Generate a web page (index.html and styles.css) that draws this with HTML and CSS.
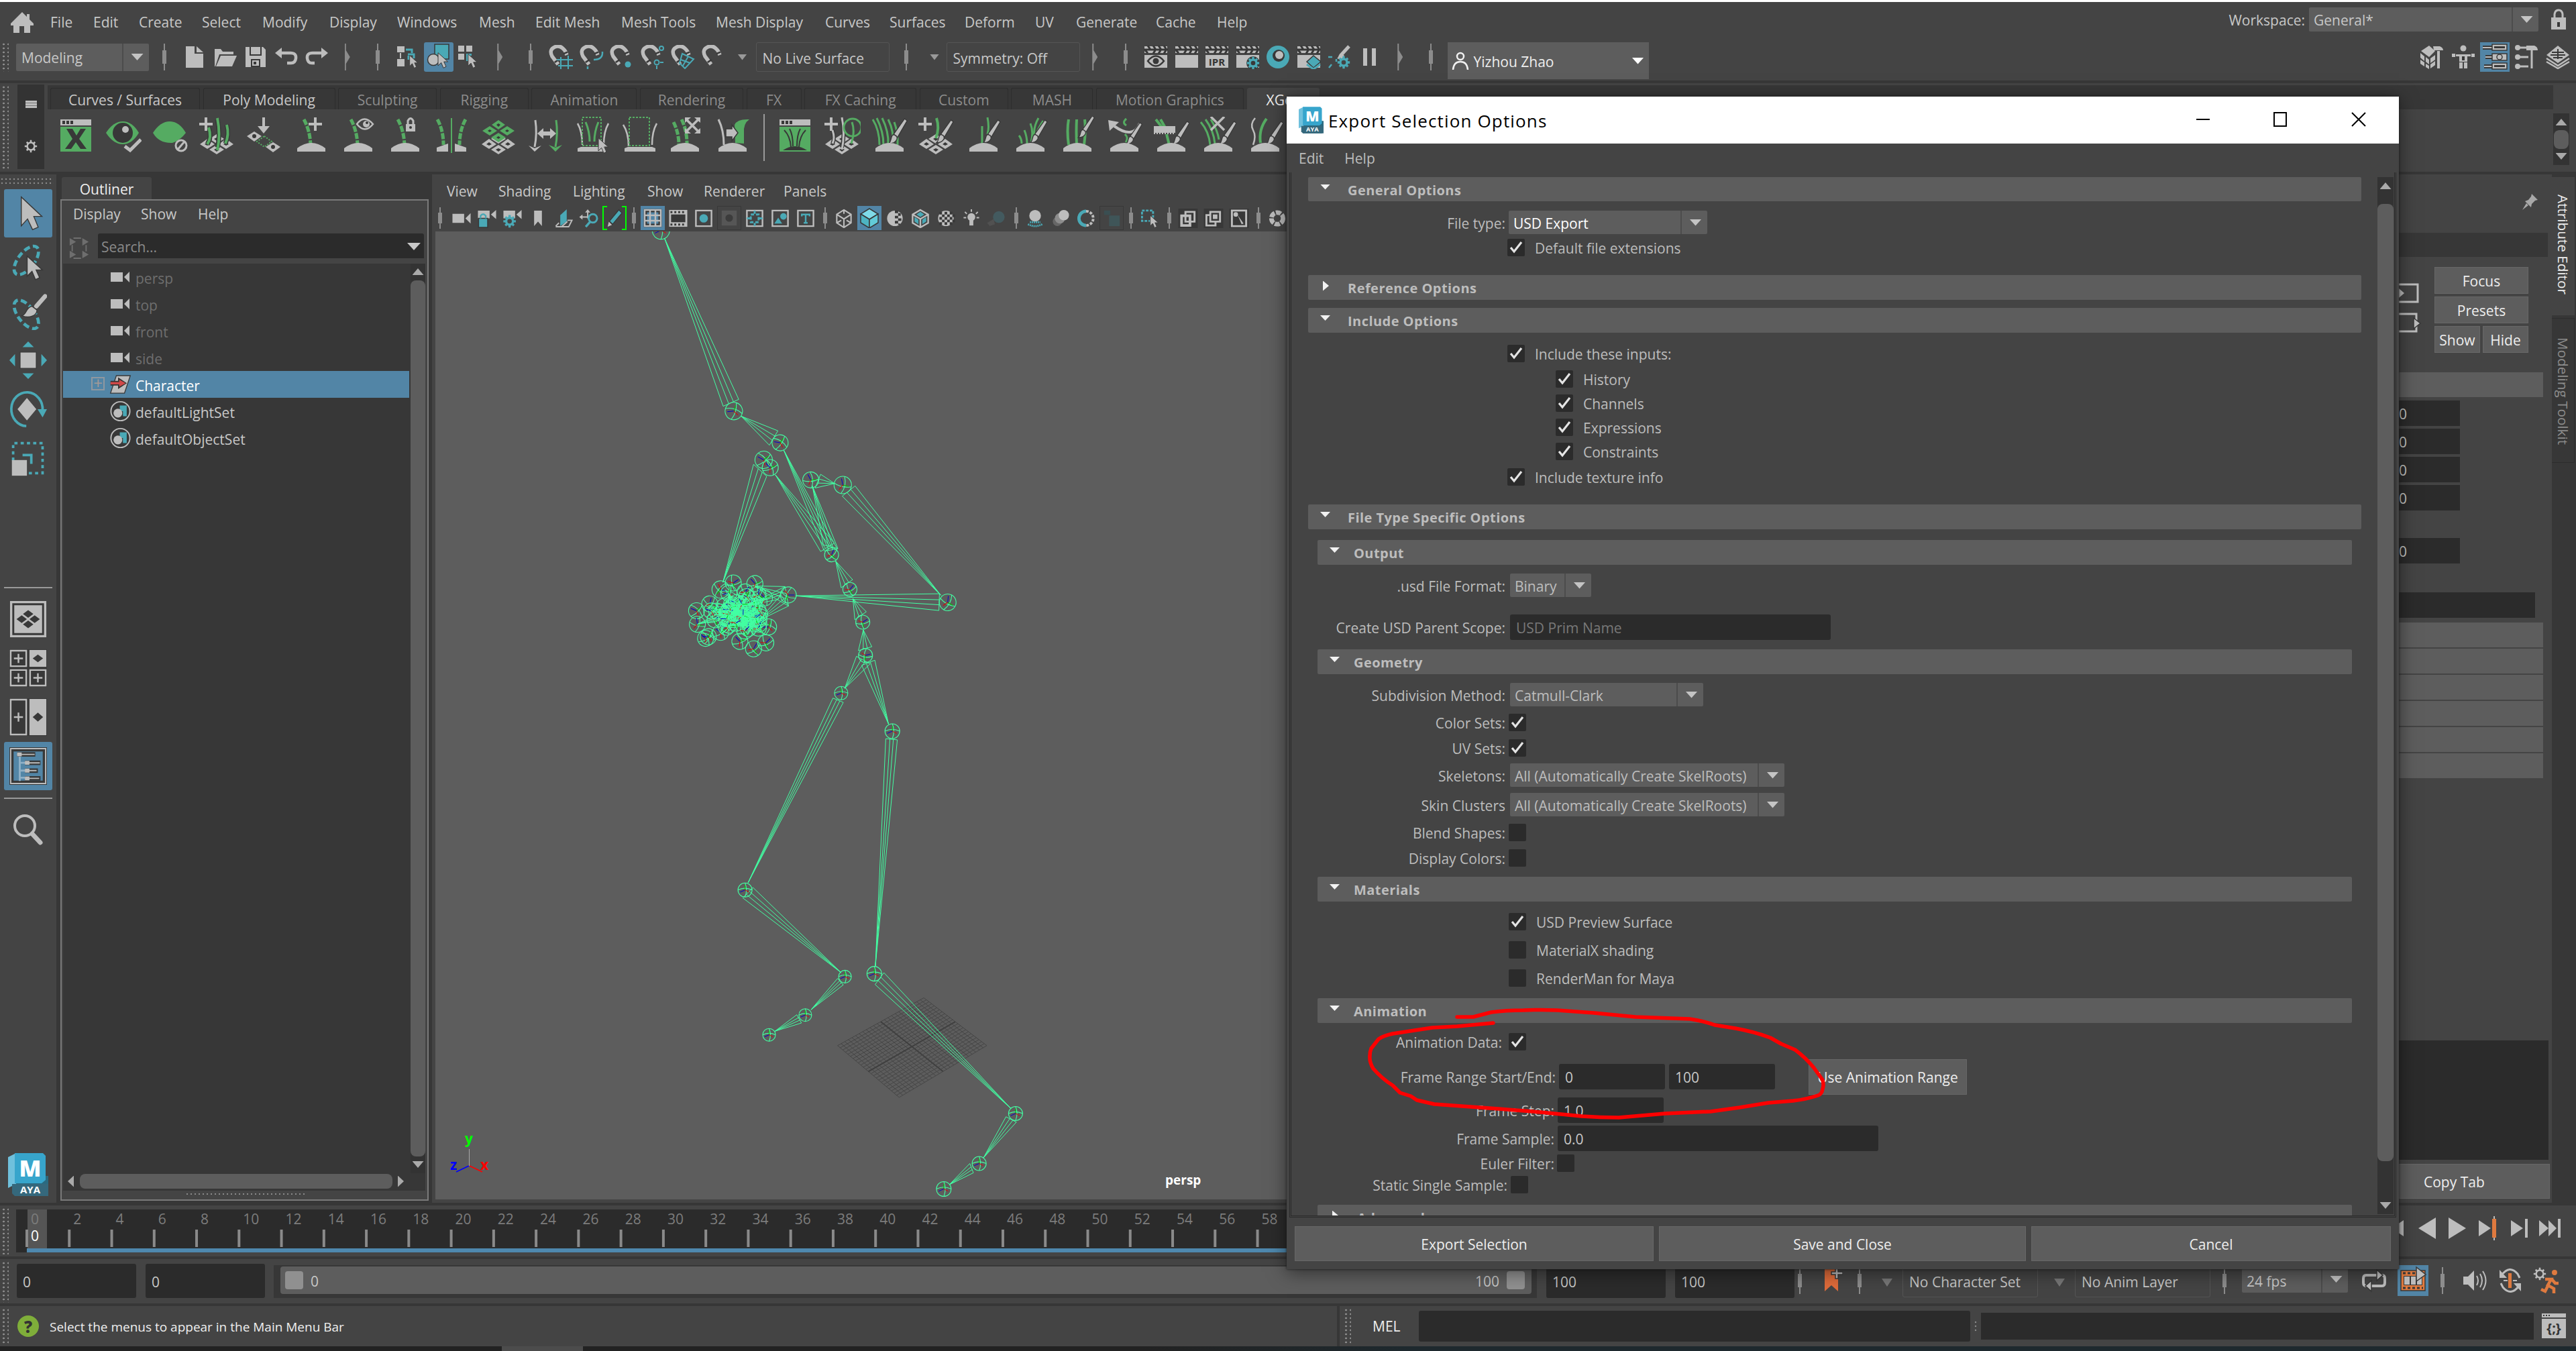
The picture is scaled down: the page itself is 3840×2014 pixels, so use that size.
FILE: index.html
```html
<!DOCTYPE html>
<html lang="en">
<head>
<meta charset="utf-8">
<title>Export Selection Options</title>
<link rel="stylesheet" href="styles.css">
</head>
<body>
<svg class="sprite" aria-hidden="true">
  <!-- shared pieces -->
  <symbol id="cursor" viewBox="0 0 36 36"><path class="g o" d="M3 1v29l7-7 5 12 6-3-5-11h9z"/></symbol>
  <symbol id="gear" viewBox="0 0 24 24"><circle class="gs" cx="12" cy="12" r="6.500" stroke-width="3"/><path class="gs" stroke-width="3" d="M12 1v5M12 18v5M1 12h5M18 12h5M4.500 4.500l3 3M16.500 16.500l3 3M19.500 4.500l-3 3M7.500 16.500l-3 3"/></symbol>
  <symbol id="gear-teal" viewBox="0 0 24 24"><circle class="ts" cx="12" cy="12" r="6" stroke-width="4"/><path class="ts" stroke-width="4" d="M12 1v5M12 18v5M1 12h5M18 12h5M4.500 4.500l3 3M16.500 16.500l3 3M19.500 4.500l-3 3M7.500 16.500l-3 3"/></symbol>
  <symbol id="brush" viewBox="0 0 30 46"><path class="g o" d="M26 1l4 3-15 26-6-5zM8 26c4 0 7 2 6 7-2 5-7 7-13 7 5-4 3-12 7-14z"/></symbol>
  <symbol id="ground" viewBox="0 0 42 14"><path class="g" d="M0 14V9Q21-7 42 9v5z"/></symbol>
  <symbol id="plus" viewBox="0 0 20 20"><path class="g" d="M8 0h4v8h8v4h-8v8H8v-8H0V8h8z"/></symbol>
  <symbol id="logo" viewBox="0 0 60 64"><path fill="#2a6a80" d="M6 34h54v24l-4 6H10z"/><path fill="#6fc0dc" d="M0 6l12-6v46L0 52z"/><path fill="#37a5cc" d="M10 0h42l4 4v36l-6 5H10z"/><path fill="#35687c" d="M6 46h54v18H10l-4-4z"/><text x="33" y="35" class="logo-m">M</text><text x="33" y="60" class="logo-aya">AYA</text></symbol>

  <!-- status line -->
  <symbol id="home" viewBox="0 0 36 32"><path class="g" d="M18 1L1 18v3h4v11h9V22h7v10h9V21h5v-3l-6-6V4h-4v4z"/></symbol>
  <symbol id="new" viewBox="0 0 36 36"><path class="g" d="M5 2h13v11h13v21H5z"/><path class="g" d="M21 2l10 9H21z"/></symbol>
  <symbol id="open" viewBox="0 0 36 36"><path class="g" d="M2 6h9l3 4h16v4H9L3 32H2z"/><path class="g" d="M11 16h24l-7 16H4z"/></symbol>
  <symbol id="save" viewBox="0 0 36 36"><path class="g" d="M3 3h26l4 4v26H3z"/><path class="d" d="M9 3h18v13H9zM11 21h14v12H11z"/><path class="g" d="M11 3h14v11H11zM13 23h10v8H13z"/><path class="d" d="M15 25h4v4h-4z"/></symbol>
  <symbol id="undo" viewBox="0 0 36 36"><path class="gs" stroke-width="4.500" d="M9 12h15q9 0 8 8t-9 7h-4"/><path class="g" d="M1 12l10-8v16z"/></symbol>
  <symbol id="redo" viewBox="0 0 36 36"><path class="gs" stroke-width="4.500" d="M27 12H12q-9 0-8 8t9 7h2"/><path class="g" d="M35 12L25 4v16z"/></symbol>
  <symbol id="sel-h" viewBox="0 0 36 36"><path class="g" d="M1 2h11v9H1zM1 21h11v11H1z"/><path class="gs" stroke-width="2" d="M6 12v8"/><path class="ts" stroke-width="3" d="M14 7h9v5M18 16v6M17 14h9v6"/><use href="#cursor" x="18" y="12" width="20" height="26"/></symbol>
  <symbol id="sel-o" viewBox="0 0 44 44"><path class="t o" d="M16 3h21v22H16z"/><circle class="g o" cx="14" cy="26" r="8.500"/><use href="#cursor" x="19" y="13" width="24" height="28"/></symbol>
  <symbol id="sel-c" viewBox="0 0 36 36"><path class="g" d="M1 1h9v9H1zM13 1h9v9h-9zM1 13h9v9H1z"/><path class="t" d="M13 13h8v3h-5v8h-3z"/><use href="#cursor" x="14" y="11" width="22" height="26"/></symbol>
  <symbol id="magnet" viewBox="0 0 36 36"><path class="gs" stroke-width="5.500" d="M14 29L5 17Q0 7 9 3t16 7l2 5"/><path class="d" d="M8 25l6-4 1.500 2-6 4zM21.500 12l6-2.500 1 2.200-6 2.500z"/></symbol>
  <symbol id="mg1" viewBox="0 0 36 36"><use href="#magnet"/><path class="ts" stroke-width="2" d="M18 18v18M29 16v20M12 22h24M14 31h22"/></symbol>
  <symbol id="mg2" viewBox="0 0 36 36"><use href="#magnet"/><path class="ts" stroke-width="2.500" d="M34 10q1 12-13 12M12 32v4"/></symbol>
  <symbol id="mg3" viewBox="0 0 36 36"><use href="#magnet"/><circle class="t" cx="27" cy="29" r="4.500"/></symbol>
  <symbol id="mg4" viewBox="0 0 36 36"><use href="#magnet"/><circle class="ts" cx="31" cy="5" r="3" stroke-width="2"/><circle class="ts" cx="24" cy="26" r="3.500" stroke-width="2"/><path class="ts" stroke-width="2" d="M24 31v5M29 26h5"/></symbol>
  <symbol id="mg5" viewBox="0 0 36 36"><use href="#magnet"/><path class="ts" stroke-width="2" d="M17 13l17 8-13 14-8-8zM15 22l14 5M26 17l-8 14"/></symbol>
  <symbol id="clap" viewBox="0 0 36 36"><path class="g" d="M1 15h34v19H1z"/><path d="M1 2h34v10H1z" class="g"/><path class="ds" stroke-width="3" d="M0 7h36M6 1l4 6M14 1l4 6M22 1l4 6M30 1l4 6M6 12l-4-4M14 13l3-5M22 13l3-5M30 13l3-5"/></symbol>
  <symbol id="r1" viewBox="0 0 36 36"><use href="#clap"/><path class="ds" stroke-width="2.500" d="M6 24q12-15 24 0q-12 15-24 0z"/><circle cx="18" cy="24" r="4.500" class="d"/></symbol>
  <symbol id="r3" viewBox="0 0 36 36"><use href="#clap"/><text x="18" y="31" class="ipr">IPR</text></symbol>
  <symbol id="r4" viewBox="0 0 36 36"><use href="#clap"/><circle class="d" cx="26" cy="27" r="10"/><use href="#gear-teal" x="16" y="17" width="20" height="20"/></symbol>
  <symbol id="r5" viewBox="0 0 36 36"><circle class="t" cx="18" cy="18" r="17"/><circle class="d" cx="19" cy="16" r="9"/><circle class="g" cx="20" cy="15" r="6"/></symbol>
  <symbol id="r6" viewBox="0 0 36 36"><use href="#clap"/><path class="t o" d="M25 16l11 9-11 9-10-9z"/><path class="ts" stroke-width="3" d="M15 29l10 7 10-7"/></symbol>
  <symbol id="r7" viewBox="0 0 36 36"><path class="gs" stroke-width="5" d="M33 2L22 14"/><path class="g" d="M21 12l5 4c-2 5-7 6-11 4 3-2 2-6 6-8z"/><path class="ts" stroke-width="2.500" d="M2 18h6M3 34l4-5M14 21v4"/><use href="#gear-teal" x="15" y="16" width="20" height="20"/></symbol>
  <symbol id="pause" viewBox="0 0 36 36"><path class="g" d="M8 5h6v26H8zM21 5h6v26h-6z"/></symbol>
  <symbol id="user" viewBox="0 0 26 28"><circle cx="13" cy="7" r="5" class="ws"/><path class="ws" d="M2 27q1-12 11-12t11 12"/></symbol>
  <symbol id="lock" viewBox="0 0 24 32"><path class="gs" stroke-width="3" d="M6 14V8q1-6 6-6t6 6v6"/><path class="g" d="M1 13h22v18H1z"/><path class="d" d="M10 20h4v7h-4z"/></symbol>
  <symbol id="p1" viewBox="0 0 36 36"><path class="g" d="M2 9L14 1l9 8-9 9zM1 12l6 5v7l-6-5zM9 18l5 4v7l-5-4zM16 20l7-5v7l-7 5zM1 22l6 4v6l-6-4zM9 28l5 3v5l-5-3zM16 29l7-5v6l-7 5z"/><path class="g" d="M20 2h10q5 2 5 6H21zM26 9h4v26h-4z"/></symbol>
  <symbol id="p2" viewBox="0 0 36 36"><circle class="g" cx="18" cy="5" r="4.500"/><path class="g" d="M1 13h5v5H1zM30 13h5v5h-5zM7 14h22v3H7zM12 14h12v11H12zM12 26h5v9h-5zM19 26h5v9h-5z"/><path class="d" d="M16 17h4v6h-4z"/></symbol>
  <symbol id="p3" viewBox="0 0 44 44"><path class="ds" stroke-width="6" d="M4 8h14M8 22h10M6 36h12"/><path class="gs" stroke-width="2" d="M4 8h14M8 22h10M6 36h12"/><path class="g o" d="M18 3h22v9H18zM18 17h22v10H18zM18 31h22v9H18z"/><path class="d" d="M21 6h16v3H21zM21 34h16v3H21z"/><circle cx="29" cy="22" r="4" class="g o"/></symbol>
  <symbol id="p4" viewBox="0 0 36 36"><path class="gs" stroke-width="3" d="M5 4h13M5 18h16M5 32h16M26 8v27"/><circle class="g" cx="5" cy="4" r="4"/><circle class="g" cx="5" cy="18" r="4"/><circle class="g" cx="5" cy="32" r="4"/><path class="g" d="M18 1h12q5 2 5 7H18z"/></symbol>
  <symbol id="p5" viewBox="0 0 36 36"><path class="g" d="M18 1l17 14-17 12L1 15z"/><path class="gs" stroke-width="2.500" d="M1 20l17 11 17-11M1 25l17 10 17-10"/><path class="ds" stroke-width="2" d="M9 11h18M7 15h22M11 19h14M18 6v15"/></symbol>

  <!-- shelf -->
  <symbol id="s1" viewBox="0 0 56 56"><path class="g" d="M5 4h46v9H5z"/><path class="e" d="M5 15h46v37H5z"/><path class="d" d="M8 6h4v5H8zM14 6h4v5h-4zM20 6h4v5h-4zM14 18h9l6 10 6-10h8L33 33l11 15h-9l-7-10-7 10h-9l11-15z"/></symbol>
  <symbol id="s2" viewBox="0 0 56 56"><path class="e" d="M3 24Q14 7 28 7t24 17q-10 17-24 17T3 24z"/><circle class="d" cx="28" cy="24" r="15"/><ellipse class="g" cx="32" cy="19" rx="5" ry="5"/><path class="gs" stroke-width="5" d="M31 44l8 6 16-16"/></symbol>
  <symbol id="s3" viewBox="0 0 56 56"><path class="e" d="M3 24Q14 7 28 7t24 17q-8 11-20 15-20 1-29-15z"/><circle class="gs" cx="45" cy="43" r="8" stroke-width="3"/><path class="gs" stroke-width="3" d="M50 37L39 50"/></symbol>
  <symbol id="diamonds" viewBox="0 0 56 56"><path class="g" d="M28 26l11 7-11 7-11-7zM14 33l11 8-11 7-11-7zM42 33l11 8-11 7-11-7zM28 42l11 7-11 7-11-7z"/><path class="d" d="M28 31l4 2-4 3-4-3zM14 38l4 3-4 2-4-2zM42 38l4 3-4 2-4-2zM28 47l4 2-4 3-4-3z"/></symbol>
  <symbol id="s4" viewBox="0 0 56 56"><use href="#diamonds"/><path class="ds" stroke-width="7" d="M16 16q5 15-2 25M29 4q5 25 0 42M43 12q4 15-2 28"/><path class="es" stroke-width="4" d="M16 16q5 15-2 25M29 2q5 25 0 48M43 12q4 15-2 28"/><use href="#plus" x="2" y="1" width="20" height="20"/></symbol>
  <symbol id="s5" viewBox="0 0 56 56"><path class="gs" stroke-width="4" d="M28 1v14"/><path class="g" d="M19 14h18l-9 11z"/><path class="g" d="M14 22l11 7-11 8-11-8zM42 38l11 7-11 8-11-8z"/><path class="es" stroke-width="2" stroke-dasharray="2 2" d="M29 29l11 8-11 8-11-8z"/><circle class="d" cx="14" cy="29" r="3"/><circle class="d" cx="42" cy="45" r="3"/></symbol>
  <symbol id="blade" viewBox="0 0 56 56"><path class="es" stroke-width="5" stroke-dasharray="9 2" d="M18 4q9 16 10 38"/><use href="#ground" x="8" y="38" width="42" height="14"/></symbol>
  <symbol id="s6" viewBox="0 0 56 56"><use href="#blade"/><use href="#plus" x="25" y="1" width="20" height="20"/></symbol>
  <symbol id="s7" viewBox="0 0 56 56"><use href="#blade"/><path class="gs" stroke-width="2.500" d="M27 11q11-15 24 0q-12 15-24 0z"/><circle class="g" cx="41" cy="11" r="5"/><circle class="d" cx="42" cy="9" r="2"/></symbol>
  <symbol id="s8" viewBox="0 0 56 56"><use href="#blade"/><path class="gs" stroke-width="3" d="M33 12V6q4-7 8 0v6"/><path class="g" d="M30 11h14v11H30z"/><circle class="d" cx="37" cy="16" r="2"/></symbol>
  <symbol id="s9" viewBox="0 0 56 56"><path class="es" stroke-width="5" stroke-dasharray="9 2" d="M7 4q9 16 9 38M49 4q-9 16-9 38"/><path class="es" stroke-width="2" d="M28 2v52"/><path class="g" d="M6 52v-6l17-6v12zM50 52v-6l-17-6v12z"/></symbol>
  <symbol id="s10" viewBox="0 0 56 56"><use href="#diamonds"/><path class="e" d="M28 5l10 7-10 7-10-7zM15 14l11 7-11 7-11-7zM41 14l11 7-11 7-11-7zM28 24l11 7-11 7-11-7z"/><path class="d" d="M28 10l3 2-3 3-3-3zM15 19l3 2-3 2-3-2zM41 19l3 2-3 2-3-2zM28 29l3 2-3 2-3-2z"/></symbol>
  <symbol id="s11" viewBox="0 0 56 56"><path class="gs" stroke-width="3" d="M13 5q3 20-1 40"/><path class="es" stroke-width="3" d="M44 5q3 20-1 40"/><path class="g" d="M3 43l9 4 10-4-10 9zM16 25l9-8v5h10v-5l9 8-9 8v-5H25v5z"/><path class="e" d="M33 42l10 4 10-4-10 10z"/></symbol>
  <symbol id="s12" viewBox="0 0 56 56"><path class="gs" stroke-width="2.500" d="M6 10q7 12 7 32M52 10q-7 12-7 32"/><path class="es" stroke-width="3" d="M18 8q6 14 6 29M37 8q-6 14-6 29"/><path class="es" stroke-width="2" stroke-dasharray="3 2" d="M13 1h28v42H13z"/><path class="g" d="M6 52v-5l5-2h36v7z"/><use href="#cursor" x="35" y="28" width="24" height="30"/></symbol>
  <symbol id="s13" viewBox="0 0 56 56"><path class="gs" stroke-width="2.500" d="M4 12q8 12 8 32M54 10q-7 12-7 32"/><path class="es" stroke-width="2" stroke-dasharray="3 2" d="M13 1h30v42H13z"/><path class="g" d="M6 52v-5l5-2h36l5 2v5z"/></symbol>
  <symbol id="s14" viewBox="0 0 56 56"><path class="es" stroke-width="5" stroke-dasharray="9 2" d="M9 8q8 16 8 34M21 4q8 16 8 36"/><path class="gs" stroke-width="3.500" d="M28 4l18 18M46 4L28 22"/><path class="g" d="M26 1h9l-9 8zM49 1h-9l9 8zM26 25h9l-9-8zM49 25h-9l9-8z"/><use href="#ground" x="5" y="38" width="42" height="14"/></symbol>
  <symbol id="s15" viewBox="0 0 56 56"><path class="gs" stroke-width="3" d="M6 4q8 16 8 38"/><path class="e" d="M30 12q4-9 22-8-9 6-8 20v16l-13-1z"/><path class="g o" d="M17 18h9v-6l9 12-9 12v-6h-9z"/><use href="#ground" x="6" y="38" width="42" height="14"/></symbol>
  <symbol id="t1" viewBox="0 0 56 56"><path class="g" d="M5 4h46v9H5z"/><path class="e" d="M5 15h46v37H5z"/><path class="d" d="M8 6h4v5H8zM14 6h4v5h-4zM20 6h4v5h-4zM10 50q18-12 36 0z"/><path class="ds" stroke-width="2" d="M12 20q9 9 10 25M20 18q5 9 5 26M36 18q-5 9-5 26M44 20q-9 9-10 25"/></symbol>
  <symbol id="t2" viewBox="0 0 56 56"><use href="#diamonds"/><path class="ds" stroke-width="6" d="M28 6q5 20 0 40M14 20q4 12 0 20"/><path class="gs" stroke-width="3" d="M28 1q5 25 0 48M14 20q4 12 0 20"/><use href="#plus" x="2" y="1" width="20" height="20"/><circle class="es" cx="44" cy="16" r="13" stroke-width="3"/><path class="es" stroke-width="3" d="M43 8q5 14-1 32"/></symbol>
  <symbol id="t3" viewBox="0 0 56 56"><path class="es" stroke-width="3" d="M4 4q10 16 10 38M10 2q10 20 10 40M18 2q10 20 9 40M27 4q9 18 7 38M36 8q6 16 5 34"/><use href="#brush" x="24" y="2" width="34" height="44"/><use href="#ground" x="8" y="38" width="42" height="14"/></symbol>
  <symbol id="t4" viewBox="0 0 56 56"><use href="#diamonds"/><path class="es" stroke-width="4" d="M29 2q5 15-1 30"/><use href="#plus" x="2" y="1" width="20" height="20"/><use href="#brush" x="24" y="4" width="34" height="40"/></symbol>
  <symbol id="t5" viewBox="0 0 56 56"><path class="es" stroke-width="3" d="M27 14v26M35 1q3 15 0 25"/><use href="#brush" x="24" y="4" width="34" height="40"/><use href="#ground" x="8" y="38" width="42" height="14"/></symbol>
  <symbol id="t6" viewBox="0 0 56 56"><path class="es" stroke-width="3" d="M12 28q4 5 4 12M20 20q4 10 4 20M29 10q5 12 1 28M41 2q-8 14-6 26M48 6q-8 12-10 20"/><use href="#brush" x="24" y="4" width="34" height="40"/><use href="#ground" x="8" y="38" width="42" height="14"/></symbol>
  <symbol id="t7" viewBox="0 0 56 56"><path class="es" stroke-width="4" d="M16 4q-3 16 0 38M28 4q-1 16 0 38M40 4q2 16-1 38"/><use href="#brush" x="25" y="-2" width="34" height="38"/><use href="#ground" x="8" y="38" width="42" height="14"/></symbol>
  <symbol id="t8" viewBox="0 0 56 56"><path class="es" stroke-width="3" d="M32 3q-7 6 0 10M30 26q6 6 1 12"/><path class="gs" stroke-width="4" d="M52 10q-10 24-38 4"/><path class="g" d="M5 5l16 3-14 13z"/><use href="#brush" x="26" y="8" width="34" height="38"/><use href="#ground" x="8" y="38" width="42" height="14"/></symbol>
  <symbol id="t9" viewBox="0 0 56 56"><path class="es" stroke-width="4" d="M6 4l11 14M13 4l8 14M22 26l4 16"/><path class="g" d="M3 14h32v10H3z"/><path class="gs" stroke-width="2" stroke-dasharray="2 2" d="M3 25h32"/><use href="#brush" x="26" y="6" width="34" height="40"/><use href="#ground" x="8" y="38" width="42" height="14"/></symbol>
  <symbol id="t10" viewBox="0 0 56 56"><path class="es" stroke-width="3" d="M3 8q12 14 14 34M10 4q12 16 14 36M18 4q10 16 12 30"/><path class="gs" stroke-width="3.500" d="M18 0l20 20M38 0L18 20"/><use href="#brush" x="26" y="6" width="34" height="40"/><use href="#ground" x="8" y="38" width="42" height="14"/></symbol>
  <symbol id="t11" viewBox="0 0 56 56"><path class="gs" stroke-width="2.500" d="M14 2q-8 9-3 18t0 22"/><path class="es" stroke-width="4" d="M31 3q-12 16-9 36"/><use href="#brush" x="26" y="6" width="34" height="40"/><use href="#ground" x="8" y="38" width="42" height="14"/></symbol>

  <!-- view panel -->
  <symbol id="cam" viewBox="0 0 30 30"><path class="g" d="M1 8h18v14H1zM21 15l8-8v16z"/></symbol>
  <symbol id="camlock" viewBox="0 0 30 30"><path class="g" d="M1 3h18v12H1zM21 9l8-7v14z"/><path class="t o" d="M2 15h14v14H2z"/><path class="ts" stroke-width="2.500" d="M5 15v-4q4-5 8 0v4"/></symbol>
  <symbol id="camgear" viewBox="0 0 30 30"><path class="g" d="M1 3h18v12H1zM21 9l8-7v14z"/><use href="#gear-teal" x="0" y="9" width="21" height="21"/></symbol>
  <symbol id="mark" viewBox="0 0 30 30"><path class="g" d="M9 3h12v24l-6-7-6 7z"/></symbol>
  <symbol id="plane" viewBox="0 0 30 30"><path class="t" d="M10 10l10-9v19l-10 7z"/><path class="gs" stroke-width="2" d="M3 27l5-5M3 28h20l5-10h-7M12 28l9-8"/></symbol>
  <symbol id="pan" viewBox="0 0 30 30"><path class="gs" stroke-width="2" d="M13 3v12M2 13h11"/><path class="g" d="M9 6l4-5 4 5zM5 9l-5 4 5 4z"/><circle class="ts" cx="21" cy="15" r="6.500" stroke-width="3"/><path class="ts" stroke-width="3.500" d="M17 20l-7 8"/></symbol>
  <symbol id="pencil" viewBox="0 0 30 30"><path class="t o" d="M22 2l5 5-15 18-5-5z"/><path class="g" d="M6 21l5 5-7 3z"/></symbol>
  <symbol id="grid" viewBox="0 0 30 30"><path class="ds" stroke-width="5" d="M4 4h22v22H4z"/><path class="gs" stroke-width="2.500" d="M3 3h24v24H3zM11 3v24M19 3v24M3 11h24M3 19h24"/></symbol>
  <symbol id="film" viewBox="0 0 30 30"><path class="g" d="M1 2h28v26H1z"/><path class="d" d="M4 9h22v12H4z"/><path class="ds" stroke-width="3" stroke-dasharray="3 3" d="M3 5.500h24M3 24.500h24"/></symbol>
  <symbol id="gate" viewBox="0 0 30 30"><path class="gs" stroke-width="2.500" d="M3 3h24v24H3z"/><circle class="t" cx="15" cy="15" r="6.500"/></symbol>
  <symbol id="mask" viewBox="0 0 30 30"><path fill="#565656" d="M3 3h24v24H3z"/><circle fill="#3c3c3c" cx="15" cy="15" r="6"/></symbol>
  <symbol id="chart" viewBox="0 0 30 30"><path class="gs" stroke-width="2.500" d="M3 3h24v24H3z"/><path class="ts" stroke-width="3" d="M9 9h12v12H9z" stroke-dasharray="5 3"/><path class="ts" stroke-width="3" d="M15 3v5M15 22v5M3 15h5M22 15h5"/></symbol>
  <symbol id="safea" viewBox="0 0 30 30"><path class="gs" stroke-width="2.500" d="M3 3h24v24H3z"/><path class="t" d="M6 23l6-9 6 9z"/><circle class="t" cx="20" cy="12" r="5"/></symbol>
  <symbol id="safet" viewBox="0 0 30 30"><path class="gs" stroke-width="2.500" d="M3 3h24v24H3z"/><path class="ts" stroke-width="2.500" d="M9 12V9h12v3M15 9v13M12 22h6"/></symbol>
  <symbol id="wire" viewBox="0 0 30 30"><path class="gs" stroke-width="2.200" d="M15 2l11 7v13l-11 7-11-7V9zM4 9l11 7 11-7M15 16v13M15 2v6M4 22l7-4M26 22l-7-4"/></symbol>
  <symbol id="cube" viewBox="0 0 30 30"><path class="o" fill="#7fdbe8" d="M15 1l13 8-13 8L2 9z"/><path class="o" fill="#4db4c2" d="M2 9l13 8v13L2 22z"/><path class="o" fill="#62cbd8" d="M28 9l-13 8v13l13-8z"/></symbol>
  <symbol id="half" viewBox="0 0 30 30"><circle cx="15" cy="15" r="12" class="g"/><path class="d" d="M15 3h5v4h-5zM20 7h4v4h-4zM15 11h5v4h-5zM20 15h5v4h-5zM15 19h5v4h-5zM20 23h3v2h-3z"/></symbol>
  <symbol id="cubew" viewBox="0 0 30 30"><path class="gs" stroke-width="2.500" d="M15 2l12 7v13l-12 7-12-7V9zM3 9l12 7 12-7M15 16v13"/><path class="t" d="M15 5l6 4-6 4-6-4zM6 13l6 4v7l-6-4zM24 13l-6 4v7l6-4z"/></symbol>
  <symbol id="checker" viewBox="0 0 30 30"><circle cx="15" cy="15" r="12" class="g"/><path class="ds" stroke-width="4" stroke-dasharray="4 4" d="M5 7h22M9 11h20M5 15h22M9 19h20M5 23h22"/></symbol>
  <symbol id="bulb" viewBox="0 0 30 30"><circle cx="15" cy="13" r="6" class="g"/><path class="g" d="M12 16h6v10h-6z"/><path class="gs" stroke-width="2" d="M15 1v4M5 5l3 3M25 5l-3 3M3 14h4M23 14h4"/></symbol>
  <symbol id="dim" viewBox="0 0 30 30"><circle cx="18" cy="13" r="9" fill="#435a5f"/><path fill="#515151" d="M0 22l10-6 2 8-8 3z"/></symbol>
  <symbol id="ao" viewBox="0 0 30 30"><circle cx="15" cy="11" r="9" class="g"/><path class="ts" stroke-width="3" stroke-dasharray="2 1" d="M4 24q11 6 22 0M7 21h16"/></symbol>
  <symbol id="blur" viewBox="0 0 30 30"><circle cx="10" cy="20" r="7" fill="#666"/><circle cx="14" cy="15" r="8" fill="#8c8c8c"/><circle cx="20" cy="10" r="8" class="g"/></symbol>
  <symbol id="aa" viewBox="0 0 30 30"><path class="ts" stroke-width="5" d="M15 4a11 11 0 0 0 0 22"/><path class="gs" stroke-width="4" stroke-dasharray="4 2" d="M15 4a11 11 0 0 1 0 22"/></symbol>
  <symbol id="dof" viewBox="0 0 30 30"><path fill="#3f5558" d="M11 11h17v17H11z"/><path fill="#3a4f52" d="M3 3h10v7H3z"/></symbol>
  <symbol id="iso" viewBox="0 0 30 30"><path class="ts" stroke-width="3" stroke-dasharray="4 2" d="M3 3h17v16H3z"/><use href="#cursor" x="14" y="8" width="20" height="24"/></symbol>
  <symbol id="x1" viewBox="0 0 30 30"><path class="d" d="M0 0h30v30H0z"/><path class="gs" stroke-width="4" d="M5 11h13v15H5z"/><path class="gs" stroke-width="3" d="M11 5h14v15H11z"/></symbol>
  <symbol id="x2" viewBox="0 0 30 30"><path class="d" d="M0 0h30v30H0z"/><path class="gs" stroke-width="3" d="M9 10H4v16h14v-5M10 5h15v15H10z"/><path class="g" d="M14 9h7v7h-7z"/></symbol>
  <symbol id="x3" viewBox="0 0 30 30"><path class="d" d="M0 0h30v30H0z"/><path class="gs" stroke-width="3" d="M4 3h22v24H4z"/><circle class="g" cx="10" cy="9" r="3.500"/><path class="g" d="M13 10l9 13-3 1z"/></symbol>
  <symbol id="iris" viewBox="0 0 30 30"><circle class="gs" cx="15" cy="15" r="9" stroke-width="7" stroke-dasharray="8 2"/></symbol>

  <!-- toolbox -->
  <symbol id="lasso" viewBox="0 0 60 60"><ellipse class="ts" stroke-width="5" stroke-dasharray="10 5" cx="27" cy="27" rx="13" ry="27" transform="rotate(38 27 27)"/><use href="#cursor" x="25" y="18" width="40" height="42"/></symbol>
  <symbol id="psel" viewBox="0 0 60 60"><ellipse class="ts" stroke-width="5" stroke-dasharray="10 5" cx="27" cy="35" rx="13" ry="27" transform="rotate(-38 27 35)"/><path class="gs" stroke-width="7" stroke-linecap="round" d="M57 6L43 22"/><path class="g o" d="M36 22l8 6c0 9-12 14-24 9 8-2 6-13 16-15z"/></symbol>
  <symbol id="move" viewBox="0 0 60 60"><path class="g o" d="M17 17h26v26H17z"/><path class="t" d="M30 0l9 9H21zM30 60l9-9H21zM0 30l9-10v20zM60 30l-9-10v20z"/></symbol>
  <symbol id="rot" viewBox="0 0 60 60"><path class="g" d="M28 12l15 18-15 18-15-18z"/><path class="ts" stroke-width="4" d="M27 57A25 27 0 1 1 53 32"/><path class="t" d="M45 30h15l-7 13z"/></symbol>
  <symbol id="scale" viewBox="0 0 60 60"><path class="ts" stroke-width="4" stroke-dasharray="5 5" d="M6 34V6h47v48H28"/><path class="g" d="M4 33h24v25H4z"/><path class="ts" stroke-width="4" d="M21 25h14v14"/></symbol>
  <symbol id="l1" viewBox="0 0 58 58"><path class="g" d="M1 1h56v56H1z"/><path class="ds" stroke-width="3" d="M6 6h46v46H6z"/><path class="d" d="M29 15l8 6-8 6-8-6zM19 23l8 6-8 6-8-6zM39 23l8 6-8 6-8-6zM29 31l8 6-8 6-8-6z"/></symbol>
  <symbol id="l2" viewBox="0 0 58 58"><path class="d" d="M0 0h58v58H0z"/><path class="gs" stroke-width="2.500" d="M2 2h24v24H2zM2 32h24v24H2zM32 32h24v24H32zM7 14h14M14 7v14M7 44h14M14 37v14M37 44h14M44 37v14"/><path class="g" d="M31 1h26v26H31z"/><path class="d" d="M44 8l8 6-8 6-8-6z"/></symbol>
  <symbol id="l3" viewBox="0 0 58 58"><path class="d" d="M0 0h58v58H0z"/><path class="gs" stroke-width="2.500" d="M2 2h24v54H2zM7 29h14M14 22v14"/><path class="g" d="M31 1h26v56H31z"/><path class="d" d="M44 22l8 7-8 7-8-7z"/></symbol>
  <symbol id="l4" viewBox="0 0 58 58"><path class="ds" stroke-width="7" d="M3 3h52v52H3z"/><path class="gs" stroke-width="2" d="M2 2h54v54H2z"/><path stroke="#8fb0c6" stroke-width="3" fill="none" d="M16 14v38M16 24h10M16 36h10M16 47h10"/><path class="ds" stroke-width="7" d="M12 11h28M24 24h24M24 36h20M24 48h24"/><path class="gs" stroke-width="2" d="M12 11h27M24 24h23M24 36h18M24 48h22"/><path class="g" d="M12 8h7v6h-7zM24 21h7v6h-7zM24 33h7v6h-7zM24 45h7v6h-7z"/></symbol>
  <symbol id="mag" viewBox="0 0 46 48"><circle class="gs" cx="18" cy="18" r="15" stroke-width="4"/><path class="gs" stroke-width="7" stroke-linecap="round" d="M29 30l12 13"/></symbol>

  <!-- outliner -->
  <symbol id="xform" viewBox="0 0 38 32"><path class="g o" d="M12 1h24L26 31H2z"/><path stroke="#333" stroke-width="8" d="M2 14h14"/><path fill="#333" d="M15 4l15 10-15 10z"/><path stroke="#d04848" stroke-width="4" d="M2 14h16"/><path fill="#d04848" d="M17 8l11 6-11 6z"/></symbol>
  <symbol id="set" viewBox="0 0 34 34"><circle class="gs" cx="17" cy="17" r="15" stroke-width="2"/><path class="t" d="M16 8h11v17h-6v-8h-5z"/><circle class="g" cx="13" cy="20" r="7"/></symbol>
  <symbol id="iomap" viewBox="0 0 34 34"><path fill="#6e6e6e" d="M2 1l10 6-10 6zM22 1l10 6-10 6zM2 21l10 6-10 6zM22 21l10 6-10 6z"/><path stroke="#6e6e6e" stroke-width="2" fill="none" d="M8 1h12M8 33h12M6 12v10M28 12v10"/></symbol>

  <!-- playback -->
  <symbol id="bk" viewBox="0 0 40 40"><path class="g" d="M34 4v32L8 20z"/></symbol>
  <symbol id="pl" viewBox="0 0 40 40"><path class="g" d="M7 4v32l26-16z"/></symbol>
  <symbol id="nk" viewBox="0 0 40 40"><path class="g" d="M6 8v24l18-12z"/><path fill="#df7a3f" d="M26 6h6v28h-6z"/><path class="gs" stroke-width="2" d="M29 2v4M29 34v4"/></symbol>
  <symbol id="pf" viewBox="0 0 40 40"><path class="g" d="M32 8v24L14 20z"/></symbol>
  <symbol id="nf" viewBox="0 0 40 40"><path class="g" d="M8 8v24l18-12zM29 6h4v28h-4z"/></symbol>
  <symbol id="ef" viewBox="0 0 40 40"><path class="g" d="M4 8v24l14-12zM18 8v24l12-12zM32 6h4v28h-4z"/></symbol>
  <symbol id="loop" viewBox="0 0 40 40"><path class="gs" stroke-width="4" d="M14 28H8q-4 0-4-5v-6q0-5 4-5h18M26 12h6q4 0 4 5v6q0 5-4 5H14"/><path class="g o" d="M24 4l9 8-9 8zM16 20l-9 8 9 8z"/></symbol>
  <symbol id="fbox" viewBox="0 0 46 46"><path class="o" fill="#df7a3f" d="M5 8h36v30H5z"/><path class="d" d="M9 16h28v14H9z"/><path class="g" d="M10 17h8v12h-8zM20 17h7v12h-7zM29 17h7v12h-7z"/><path class="ds" stroke-width="3" stroke-dasharray="4 3" d="M8 12h30M8 34h30"/><path class="g o" d="M28 3l14 11-14 10z"/></symbol>
  <symbol id="spk" viewBox="0 0 40 40"><path class="g" d="M4 14h7l9-9v30l-9-9H4z"/><path class="gs" stroke-width="2" d="M24 13q4 7 0 14M29 10q6 10 0 20M33 6q9 14 0 28"/></symbol>
  <symbol id="sync" viewBox="0 0 40 40"><path class="gs" stroke-width="3" d="M7 12Q19-4 31 10l3 6M33 28q-12 16-24 2l-3-6"/><path class="g" d="M4 4v12h11zM36 36V24H25z"/><path fill="#df7a3f" d="M17 9h5v22h-5z"/><path class="gs" stroke-width="2" d="M10 20h6M24 20h6"/></symbol>
  <symbol id="run" viewBox="0 0 40 40"><use href="#gear" x="0" y="0" width="20" height="20"/><circle fill="#df7a3f" cx="32" cy="8" r="4"/><path fill="none" stroke="#df7a3f" stroke-width="4.500" d="M18 18h9l-5 9 9 5v7M27 17l6 7h5M22 28l-4 8-6-3"/></symbol>
  <symbol id="bmark" viewBox="0 0 28 36"><path fill="#df6b3a" d="M1 0h20v34l-10-9-10 9z"/><path class="g o" d="M17-1h4v6h7v4h-7v6h-4V9h-6V5h6z"/></symbol>
  <symbol id="script" viewBox="0 0 36 38"><path class="g" d="M0 0h36v6H0zM0 8h36v29H0z"/><path class="d" d="M2 2h2v2H2zM6 2h2v2H6zM10 2h2v2h-2z"/><text x="18" y="29" class="braces">{;}</text></symbol>
  <symbol id="pin" viewBox="0 0 26 26"><path fill="#a8a8a8" d="M16 1l9 9-4 1-5 5-1 5-9-9 5-2 4-5zM8 15l3 3-9 7z"/></symbol>
  <symbol id="check" viewBox="0 0 26 26"><path fill="none" stroke="#e4e4e4" stroke-width="3.200" d="M5 13l5 6L21 5"/></symbol>
</svg>

<div class="app">
  <div class="strip"></div>
  <header class="menubar">
    <svg class="home"><use href="#home"/></svg>
    <nav class="menus"><span>File</span><span>Edit</span><span>Create</span><span>Select</span><span>Modify</span><span>Display</span><span>Windows</span><span>Mesh</span><span>Edit Mesh</span><span>Mesh Tools</span><span>Mesh Display</span><span>Curves</span><span>Surfaces</span><span>Deform</span><span>UV</span><span>Generate</span><span>Cache</span><span>Help</span></nav>
    <div class="workspace"><span>Workspace:</span><div class="combo ws-combo"><span>General*</span><i></i></div><svg class="lock"><use href="#lock"/></svg></div>
  </header>

  <div class="statusline">
    <b class="grip"></b>
    <div class="combo mode"><span>Modeling</span><i></i></div>
    <b class="sep"></b><svg><use href="#new"/></svg><svg><use href="#open"/></svg><svg><use href="#save"/></svg><svg><use href="#undo"/></svg><svg><use href="#redo"/></svg><b class="asep"></b><b class="sep"></b><svg><use href="#sel-h"/></svg><svg class="on"><use href="#sel-o"/></svg><svg><use href="#sel-c"/></svg><b class="asep"></b><b class="sep"></b><svg><use href="#mg1"/></svg><svg><use href="#mg2"/></svg><svg><use href="#mg3"/></svg><svg><use href="#mg4"/></svg><svg><use href="#mg5"/></svg><svg><use href="#magnet"/></svg>
    <b class="down"></b><div class="flat">No Live Surface</div><b class="sep"></b><b class="down"></b><div class="flat">Symmetry: Off</div>
    <b class="asep"></b><b class="sep"></b><svg><use href="#r1"/></svg><svg><use href="#clap"/></svg><svg><use href="#r3"/></svg><svg><use href="#r4"/></svg><svg><use href="#r5"/></svg><svg><use href="#r6"/></svg><svg><use href="#r7"/></svg><svg><use href="#pause"/></svg><b class="asep"></b><b class="sep"></b>
    <div class="account"><svg><use href="#user"/></svg><span>Yizhou Zhao</span><i></i></div>
    <div class="panels"><svg><use href="#p1"/></svg><svg><use href="#p2"/></svg><svg class="on"><use href="#p3"/></svg><svg><use href="#p4"/></svg><svg><use href="#p5"/></svg></div>
  </div>

  <section class="shelf">
    <b class="grip"></b>
    <div class="shelf-side"><b class="burger"></b><svg><use href="#gear"/></svg></div>
    <div class="shelf-main">
      <div class="tabs"><span class="lit">Curves / Surfaces</span><span class="lit">Poly Modeling</span><span>Sculpting</span><span>Rigging</span><span>Animation</span><span>Rendering</span><span>FX</span><span>FX Caching</span><span>Custom</span><span>MASH</span><span>Motion Graphics</span><span class="current">XGen</span></div>
      <div class="shelf-icons"><svg><use href="#s1"/></svg><svg><use href="#s2"/></svg><svg><use href="#s3"/></svg><svg><use href="#s4"/></svg><svg><use href="#s5"/></svg><svg><use href="#s6"/></svg><svg><use href="#s7"/></svg><svg><use href="#s8"/></svg><svg><use href="#s9"/></svg><svg><use href="#s10"/></svg><svg><use href="#s11"/></svg><svg><use href="#s12"/></svg><svg><use href="#s13"/></svg><svg><use href="#s14"/></svg><svg><use href="#s15"/></svg><b></b><svg><use href="#t1"/></svg><svg><use href="#t2"/></svg><svg><use href="#t3"/></svg><svg><use href="#t4"/></svg><svg><use href="#t5"/></svg><svg><use href="#t6"/></svg><svg><use href="#t7"/></svg><svg><use href="#t8"/></svg><svg><use href="#t9"/></svg><svg><use href="#t10"/></svg><svg><use href="#t11"/></svg></div>
    </div>
    <div class="mini-scroll"><b class="up"></b><b class="thumb"></b><b class="dn"></b></div>
  </section>

  <main class="work">
    <aside class="toolbox">
      <b class="hgrip"></b>
      <div class="tool on"><svg viewBox="0 0 60 60"><path class="g o" d="M19 4v46l10-11 8 17 9-4-7-17h13z"/></svg></div>
      <div class="tool"><svg><use href="#lasso"/></svg></div>
      <div class="tool"><svg><use href="#psel"/></svg></div>
      <div class="tool"><svg><use href="#move"/></svg></div>
      <div class="tool"><svg><use href="#rot"/></svg></div>
      <div class="tool"><svg><use href="#scale"/></svg></div>
      <div class="layouts">
        <div class="tool"><svg><use href="#l1"/></svg></div>
        <div class="tool"><svg><use href="#l2"/></svg></div>
        <div class="tool"><svg><use href="#l3"/></svg></div>
        <div class="tool on"><svg><use href="#l4"/></svg></div>
      </div>
      <svg class="search-tool"><use href="#mag"/></svg>
      <svg class="logo"><use href="#logo"/></svg>
    </aside>

    <section class="outliner">
      <div class="otab"><span>Outliner</span></div>
      <div class="obody">
        <nav class="omenu"><span>Display</span><span>Show</span><span>Help</span></nav>
        <div class="osearch"><svg><use href="#iomap"/></svg><div><span>Search...</span><i></i></div></div>
        <div class="otree">
          <ul>
            <li class="cam"><svg><use href="#cam"/></svg>persp</li>
            <li class="cam"><svg><use href="#cam"/></svg>top</li>
            <li class="cam"><svg><use href="#cam"/></svg>front</li>
            <li class="cam"><svg><use href="#cam"/></svg>side</li>
            <li class="picked"><em>+</em><svg class="big"><use href="#xform"/></svg>Character</li>
            <li><svg class="big"><use href="#set"/></svg>defaultLightSet</li>
            <li><svg class="big"><use href="#set"/></svg>defaultObjectSet</li>
          </ul>
          <div class="vscroll"><b class="up"></b><b class="thumb"></b><b class="dn"></b></div>
          <div class="hscroll"><b class="lf"></b><b class="thumb"></b><b class="rt"></b></div>
        </div>
        <b class="odots"></b>
      </div>
    </section>

    <section class="viewport">
      <nav class="vmenu"><span>View</span><span>Shading</span><span>Lighting</span><span>Show</span><span>Renderer</span><span>Panels</span></nav>
      <div class="vbar"><b class="sep first"></b><svg><use href="#cam"/></svg><svg><use href="#camlock"/></svg><svg><use href="#camgear"/></svg><svg><use href="#mark"/></svg><svg><use href="#plane"/></svg><svg><use href="#pan"/></svg><svg class="lime"><use href="#pencil"/></svg><b class="sep"></b><svg class="on"><use href="#grid"/></svg><svg><use href="#film"/></svg><svg><use href="#gate"/></svg><svg class="off"><use href="#mask"/></svg><svg><use href="#chart"/></svg><svg><use href="#safea"/></svg><svg><use href="#safet"/></svg><b class="sep"></b><svg><use href="#wire"/></svg><svg class="on"><use href="#cube"/></svg><svg><use href="#half"/></svg><svg><use href="#cubew"/></svg><svg><use href="#checker"/></svg><svg><use href="#bulb"/></svg><svg><use href="#dim"/></svg><b class="sep"></b><svg><use href="#ao"/></svg><svg><use href="#blur"/></svg><svg><use href="#aa"/></svg><svg class="off"><use href="#dof"/></svg><b class="sep"></b><svg><use href="#iso"/></svg><b class="sep"></b><svg><use href="#x1"/></svg><svg><use href="#x2"/></svg><svg><use href="#x3"/></svg><b class="sep"></b><svg><use href="#iris"/></svg></div>
      <svg class="scene" viewBox="649 345 2927 1443" preserveAspectRatio="xMinYMin slice">
        <g id="floor"></g>
        <g id="rig"></g>
        <path stroke="#a8a8a8" d="M699.500 1713v25"/><path stroke="#00f" stroke-width="1.500" d="M699 1738l-19 9"/><path stroke="red" stroke-width="1.500" d="M700 1738l19 9"/>
        <text class="axis" x="693" y="1705" fill="#0f0">y</text><text class="axis" x="671" y="1744" fill="#00f">z</text><text class="axis" x="716" y="1744" fill="red">x</text>
        <text class="camname" x="1737" y="1766">persp</text>
      </svg>
    </section>

    <aside class="attr">
      <div class="attr-body">
        <div class="pinrow"><svg><use href="#pin"/></svg></div>
        <div class="darkstrip"></div>
        <div class="attr-head">
          <svg viewBox="0 0 32 76"><path class="gs" stroke-width="3" d="M0 2h28v26H0M0 46h26v26H0"/><path class="g" d="M0 8l8 7-8 7z"/><path class="g o" d="M22 52l10 8-10 8z"/></svg>
          <div class="attr-btns"><button>Focus</button><button>Presets</button><button>Show</button><button>Hide</button></div>
        </div>
        <div class="attr-bar"></div>
        <div class="attr-fields"><p>0</p><p>0</p><p>0</p><p>0</p><p class="alone">0</p></div>
        <div class="attr-long"></div>
        <div class="attr-rows"><i></i><i></i><i></i><i></i><i></i><i></i></div>
        <div class="notes"></div>
        <div class="copytab">Copy Tab</div>
      </div>
      <div class="side-tabs"><span class="current">Attribute Editor</span><span>Modeling Toolkit</span></div>
    </aside>
  </main>

  <section class="timeline">
    <b class="grip"></b>
    <svg class="track" id="track" viewBox="24 1803 3376 64"></svg>
    <div class="play"><svg><use href="#pf"/></svg><svg><use href="#bk"/></svg><svg><use href="#pl"/></svg><svg><use href="#nk"/></svg><svg><use href="#nf"/></svg><svg><use href="#ef"/></svg></div>
  </section>

  <section class="range">
    <b class="grip"></b>
    <div class="num">0</div><div class="num">0</div>
    <div class="slider"><div class="bar"><b></b><span>0</span><span class="end">100</span><b></b></div></div>
    <div class="num">100</div><div class="num">100</div>
    <b class="sep s1"></b><svg class="bm"><use href="#bmark"/></svg><b class="sep s2"></b><b class="down hollow"></b>
    <div class="flat">No Character Set</div><b class="down hollow"></b><div class="flat">No Anim Layer</div>
    <b class="sep s3"></b><div class="combo fps"><span>24 fps</span><i></i></div>
    <div class="range-icons"><svg><use href="#loop"/></svg><svg class="on"><use href="#fbox"/></svg><b class="sep"></b><svg><use href="#spk"/></svg><svg><use href="#sync"/></svg><svg><use href="#run"/></svg></div>
  </section>

  <footer class="helpline">
    <b class="grip"></b>
    <span class="q">?</span><span class="hint">Select the menus to appear in the Main Menu Bar</span>
    <b class="bar"></b><b class="grip"></b><span class="mel">MEL</span><div class="cmd"></div><b class="dots3"></b><div class="out"></div><svg><use href="#script"/></svg>
  </footer>
  <div class="taskbar"><i></i></div>
</div>

<div class="dialog">
  <div class="title"><svg class="tlogo"><use href="#logo"/></svg><h1>Export Selection Options</h1>
    <svg class="winbtns" viewBox="0 0 260 24"><path class="ks" d="M4 12h20M120 2h18v20h-18zM236 2l20 20M256 2l-20 20"/></svg></div>
  <nav class="dmenu"><span>Edit</span><span>Help</span></nav>
  <div class="frame">
    <div class="form">
      <h2>General Options</h2>
      <div class="row g14"><label>File type:</label><div class="combo w296 bright"><span>USD Export</span><i></i></div></div>
      <div class="row cb g7"><svg class="chk"><use href="#check"/></svg><span>Default file extensions</span></div>
      <h2 class="g28 shut">Reference Options</h2>
      <h2 class="g12">Include Options</h2>
      <div class="row cb g18"><svg class="chk"><use href="#check"/></svg><span>Include these inputs:</span></div>
      <div class="row cb deep g12"><svg class="chk"><use href="#check"/></svg><span>History</span></div>
      <div class="row cb deep g10"><svg class="chk"><use href="#check"/></svg><span>Channels</span></div>
      <div class="row cb deep g10"><svg class="chk"><use href="#check"/></svg><span>Expressions</span></div>
      <div class="row cb deep g10"><svg class="chk"><use href="#check"/></svg><span>Constraints</span></div>
      <div class="row cb g12"><svg class="chk"><use href="#check"/></svg><span>Include texture info</span></div>
      <h2 class="g28">File Type Specific Options</h2>
      <div class="sub">
        <h2 class="g16">Output</h2>
        <div class="row g13"><label>.usd File Format:</label><div class="combo w121"><span>Binary</span><i></i></div></div>
        <div class="row tall g26"><label>Create USD Parent Scope:</label><div class="field w478 ghost">USD Prim Name</div></div>
        <h2 class="g14">Geometry</h2>
        <div class="row g13"><label>Subdivision Method:</label><div class="combo w288"><span>Catmull-Clark</span><i></i></div></div>
        <div class="row cb g11"><label>Color Sets:</label><svg class="chk"><use href="#check"/></svg></div>
        <div class="row cb g12"><label>UV Sets:</label><svg class="chk"><use href="#check"/></svg></div>
        <div class="row g10"><label>Skeletons:</label><div class="combo w409"><span>All (Automatically Create SkelRoots)</span><i></i></div></div>
        <div class="row g9"><label>Skin Clusters</label><div class="combo w409"><span>All (Automatically Create SkelRoots)</span><i></i></div></div>
        <div class="row cb g11"><label>Blend Shapes:</label><svg class="chk"></svg></div>
        <div class="row cb g12"><label>Display Colors:</label><svg class="chk"></svg></div>
        <h2 class="g15">Materials</h2>
        <div class="row cb g17"><label></label><svg class="chk"><use href="#check"/></svg><span>USD Preview Surface</span></div>
        <div class="row cb g16"><label></label><svg class="chk"></svg><span>MaterialX shading</span></div>
        <div class="row cb g16"><label></label><svg class="chk"></svg><span>RenderMan for Maya</span></div>
        <h2 class="g17">Animation</h2>
        <div class="row cb g15 early"><label>Animation Data:</label><svg class="chk"><use href="#check"/></svg></div>
        <div class="row tall g20 far"><label>Frame Range Start/End:</label><div class="field w158">0</div><div class="field w158">100</div><button class="use-range">Use Animation Range</button></div>
        <div class="row tall g12 far2"><label>Frame Step:</label><div class="field w158">1.0</div></div>
        <div class="row tall g4 far2"><label>Frame Sample:</label><div class="field w478">0.0</div></div>
        <div class="row cb g5 far2"><label>Euler Filter:</label><svg class="chk"></svg></div>
        <div class="row cb g6 near"><label>Static Single Sample:</label><svg class="chk"></svg></div>
        <h2 class="g17 shut">Advanced</h2>
      </div>
    </div>
    <div class="vscroll"><b class="up"></b><b class="thumb"></b><b class="dn"></b></div>
  </div>
  <div class="actions"><button>Export Selection</button><button>Save and Close</button><button>Cancel</button></div>
</div>

<svg class="markup" viewBox="0 0 800 260"><path d="M172 58L196 58L223 51Q245 48 271 48Q296 47 321 48L376 52L438 58L519 61Q540 64 556 70L587 75Q615 80 639 89L655 98L676 107Q692 119 704 134L717 152Q719 160 717 165Q716 173 710 175Q692 181 673 183L636 186L593 193L550 199L482 202L413 208Q385 208 358 206L296 200L234 195L138 188L112 182L103 176L87 171L76 160Q60 150 47 135Q41 125 42 116Q42 110 44 105L55 91Q62 86 76 83L135 74L172 72L226 67"/></svg>
<script src="app.js"></script>
</body>
</html>
```
FILE: styles.css
```css
* { box-sizing: border-box; }
body { margin: 0; width: 3840px; height: 2014px; overflow: hidden; background: #444; color: #c8c8c8; font: 21px/28px "Open Sans", "Noto Sans", sans-serif; white-space: nowrap; position: relative; }
h1, h2, p, ul { margin: 0; padding: 0; font-size: inherit; list-style: none; }
svg { display: block; overflow: visible; flex: none; }
button { font: inherit; color: #eee; background: #5d5d5d; border: 1px solid #676767; padding: 2px 0 0; }
.sprite { display: none; }

.g { fill: #bdbdbd; } .d { fill: #383838; } .t { fill: #4aa9b6; } .e { fill: #55ab62; } .o { stroke: #383838; stroke-width: 1.5; }
.gs, .ds, .ts, .es, .ws, .ks { fill: none; }
.gs { stroke: #bdbdbd; } .ds { stroke: #383838; } .ts { stroke: #4aa9b6; } .es { stroke: #55ab62; } .ws { stroke: #f0f0f0; stroke-width: 2.5; } .ks { stroke: #000; stroke-width: 2; }
.logo-m { font: 800 34px "Open Sans", sans-serif; fill: #fff; text-anchor: middle; }
.logo-aya { font: 700 15px "Open Sans", sans-serif; fill: #fff; text-anchor: middle; }
.ipr { font: 700 15px "Open Sans", sans-serif; fill: #333; text-anchor: middle; }
.braces { font: 700 20px "Open Sans", sans-serif; fill: #333; text-anchor: middle; }

.app { display: flex; flex-direction: column; height: 2014px; }
.strip { height: 3px; background: #fff; }
.grip { width: 24px; align-self: stretch; margin: 3px 0; background: radial-gradient(circle, #8a8a8a 1.3px, transparent 1.6px) 2px 0 / 7px 6px; background-clip: content-box; padding: 0 11px 0 3px; }
.sep { position: relative; width: 2px; height: 40px; background: #8c8c8c; justify-self: center; flex: none; }
.sep::after { content: ""; position: absolute; left: -2px; top: 10px; width: 6px; height: 20px; background: #8c8c8c; }
.asep { width: 8px; height: 40px; background: #8c8c8c; clip-path: polygon(0 0, 2px 0, 2px 25%, 100% 50%, 2px 75%, 2px 100%, 0 100%); justify-self: center; }
.down { width: 14px; height: 9px; background: #999; clip-path: polygon(0 0, 100% 0, 50% 100%); justify-self: center; flex: none; }
.combo { display: flex; align-items: center; background: #5d5d5d; border-radius: 2px; padding-left: 7px; }
.combo span { flex: 1; padding-top: 2px; }
.combo i { align-self: stretch; width: 40px; border-left: 2px solid #4c4c4c; display: grid; place-items: center; padding-left: 3px; }
.combo i::after, .account i::after { content: ""; width: 18px; height: 10px; background: #c4c4c4; clip-path: polygon(0 0, 100% 0, 50% 100%); display: block; }
.flat { height: 44px; border: 1px solid #555; border-radius: 3px; padding: 9px 0 0 9px; }
.on { background: #5285a6; }

.menubar { height: 57px; display: flex; }
.home { width: 36px; height: 32px; margin: 14px 24px 0 15px; }
.menus { display: grid; grid-template-columns: 64px 68px 94px 90px 100px 101px 122px 84px 128px 141px 163px 96px 112px 105px 61px 119px 91px 60px; padding-top: 16px; }
.workspace { margin-left: auto; display: flex; padding-right: 14px; }
.workspace > span { padding: 13px 6px 0 0; }
.ws-combo { width: 342px; height: 36px; margin-top: 8px; }
.lock { width: 24px; height: 32px; margin: 10px 0 0 18px; }

.statusline { height: 60px; display: grid; grid-template-rows: 50px; grid-template-columns: 24px 198px repeat(19, 45.5px) 40px 199px 50px 35px 199px repeat(12, 45.5px) 302px 1fr; align-items: center; }
.statusline > svg { width: 36px; height: 36px; justify-self: center; }
.statusline > svg.on { width: 44px; height: 44px; border-radius: 3px; }
.mode { height: 41px; padding-left: 8px; }
.account { display: flex; align-items: center; width: 300px; height: 55px; margin: 3px 0 0 2px; background: #5d5d5d; color: #eee; align-self: start; }
.account svg { width: 26px; height: 28px; margin: 0 7px 0 6px; }
.account span { flex: 1; padding-top: 3px; }
.account i { width: 25px; }
.account i::after { background: #fff; }
.panels { display: flex; justify-content: flex-end; align-items: center; gap: 3px; padding-right: 5px; }
.panels svg { width: 36px; height: 36px; margin: 0 4px; }
.panels svg.on { width: 44px; height: 44px; margin: 0; }

.shelf { height: 140px; border: solid #373737; border-width: 4px 0; display: flex; }
.shelf-side { width: 40px; height: 126px; margin: 2px 5px 0 2px; background: #333; display: flex; flex-direction: column; align-items: center; justify-content: space-between; padding: 24px 0; }
.burger { width: 17px; height: 11px; background: repeating-linear-gradient(#bdbdbd 0 3px, #777 3px 4px); }
.shelf-side svg { width: 22px; height: 20px; }
.shelf-main { flex: 1; padding-top: 3px; overflow: hidden; }
.tabs { height: 36px; background: #373737; display: grid; grid-template-columns: 223px 197px 147px 132px 157px 154px 82px 167px 132px 122px 220px 108px; column-gap: 4.6px; padding: 4px 0 0 4px; color: #8c8c8c; }
.tabs span { border: 1px solid #2d2d2d; border-bottom: 0; border-radius: 3px 3px 0 0; text-align: center; padding-top: 3px; }
.tabs .lit { color: #c8c8c8; }
.tabs .current { background: #444; border-color: #444; color: #eee; text-align: left; padding-left: 28px; }
.shelf-icons { display: flex; padding: 11px 0 0 7px; }
.shelf-icons svg { width: 56px; height: 56px; margin: 0 7px; }
.shelf-icons b { width: 2px; height: 70px; margin: -4px 10px; background: #9a9a9a; }
.mini-scroll { width: 24px; height: 77px; margin: 45px 10px 0 0; background: #333; display: flex; flex-direction: column; align-items: center; justify-content: space-between; padding: 8px 0; }
.mini-scroll .thumb { width: 22px; height: 28px; }
.up, .dn { width: 17px; height: 10px; background: #aaa; clip-path: polygon(0 100%, 50% 0, 100% 100%); flex: none; }
.dn { clip-path: polygon(0 0, 100% 0, 50% 100%); }
.thumb { background: #5d5d5d; border-radius: 8px; }
.lf, .rt { width: 9px; height: 17px; background: #aaa; clip-path: polygon(100% 0, 0 50%, 100% 100%); }
.rt { clip-path: polygon(0 0, 100% 50%, 0 100%); }

.work { height: 1533px; display: flex; background: #373737; }
.toolbox { width: 84px; background: #444; display: flex; flex-direction: column; align-items: center; }
.hgrip { width: 80px; height: 12px; margin: 4px 4px 6px 0; background: radial-gradient(circle, #8a8a8a 1.3px, transparent 1.6px) 0 0 / 6px 6px; }
.tool { width: 72px; height: 72px; margin-bottom: 1px; display: grid; place-items: center; border-radius: 3px; }
.tool svg { width: 56px; height: 56px; }
.layouts { border: solid #999; border-width: 2px 0; margin-top: 155px; height: 316px; padding-top: 10px; }
.search-tool { width: 46px; height: 48px; margin-top: 22px; }
.logo { width: 60px; height: 64px; margin-top: auto; margin-bottom: 10px; }

.outliner { width: 554px; padding: 4px 4px 3px 6px; margin-right: 2px; display: flex; flex-direction: column; }
.otab { height: 33px; }
.otab span { display: block; width: 134px; margin-left: 2px; height: 33px; background: #444; color: #eee; text-align: center; padding-top: 4px; border-radius: 3px 3px 0 0; }
.obody { flex: 1; background: #444; border: 2px solid #7a7a7a; width: 549px; display: flex; flex-direction: column; padding: 0 2px; }
.omenu { display: grid; grid-template-columns: 101px 85px 80px; padding: 6px 0 0 15px; height: 49px; }
.osearch { display: flex; height: 37px; }
.osearch svg { width: 32px; height: 36px; margin: 4px 12px 0 8px; }
.osearch div { width: 486px; background: #2b2b2b; border-radius: 3px 3px 0 0; padding: 8px 5px 6px; color: #8a8a8a; display: flex; justify-content: space-between; align-items: center; }
.osearch i { width: 20px; height: 11px; background: #c8c8c8; clip-path: polygon(0 0, 100% 0, 50% 100%); }
.otree { width: 540px; height: 1382px; margin-top: 8px; background: #373737; display: grid; grid-template: 1fr 26px / 1fr 22px; column-gap: 2px; }
.otree li { height: 40px; display: flex; align-items: center; padding: 3px 0 0 69px; }
.otree li.cam { color: #6e6e6e; }
.otree svg { width: 30px; height: 30px; margin: -4px 8px 0 1px; }
.otree svg.big { width: 33px; height: 32px; margin: -3px 6px 0 0; }
.otree .picked { background: #5285a6; color: #fff; padding-left: 42px; }
.picked em { width: 20px; height: 20px; margin: -6px 7px 0 0; border: 2px solid #8f98a0; color: #a59a95; font: 24px/14px "Open Sans", sans-serif; text-align: center; }
.vscroll { display: flex; flex-direction: column; align-items: center; background: #333; }
.otree .vscroll { padding: 7px 0 8px; }
.vscroll .thumb { flex: 1; width: 100%; margin: 8px 0 7px; }
.hscroll { display: flex; align-items: center; padding: 0 8px 2px 7px; }
.hscroll .thumb { flex: 1; height: 22px; margin: 0 8px 0 9px; }
.odots { height: 4px; width: 178px; margin: 3px auto 0; background: radial-gradient(circle, #8a8a8a 1.2px, transparent 1.5px) 0 0 / 6px 4px; }

.viewport { flex: 1; background: #444; display: flex; flex-direction: column; min-width: 0; padding: 0 0 5px 5px; margin-left: 4px; }
.vmenu { display: grid; grid-template-columns: 77px 111px 111px 84px 119px 70px; padding: 11px 0 0 17px; height: 47px; }
.vbar { display: flex; height: 36px; align-items: center; margin: 0 0 2px -5px; }
.vbar svg { width: 30px; height: 29px; margin: 0 4px; }
.vbar svg.on, .vbar svg.off, .vbar svg.lime { width: 36px; height: 36px; padding: 3px; margin: 0 1px; }
.vbar svg.off { border: 1px solid #383838; padding: 3px; }
.vbar svg.lime { border: 2px solid #0f0; padding: 2px; clip-path: polygon(0 0, 7px 0, 7px 4px, 29px 4px, 29px 0, 100% 0, 100% 100%, 29px 100%, 29px 32px, 7px 32px, 7px 100%, 0 100%); }
.vbar .sep { height: 32px; margin: 0 8.5px; }
.vbar .sep::after { top: 8px; height: 16px; }
.vbar .first { margin: 0 12px 0 11px; }
.scene { flex: 1; width: 100%; min-height: 0; background: #5d5d5d; overflow: hidden; }
.bone, .joint { fill: none; stroke: #43ffa3; stroke-width: 1.1; }
.bone { stroke-width: 1; }
.floor-line { stroke: #464646; stroke-width: 1; }
.floor-axis { stroke: #3f3f3f; stroke-width: 2; }
.axis { font: 700 21px "Open Sans", sans-serif; }
.camname { font: 700 19px "Open Sans", sans-serif; fill: #fff; }

.attr { width: 264px; display: flex; flex: none; }
.attr-body { width: 228px; background: #444; display: flex; flex-direction: column; align-items: flex-start; }
.pinrow { height: 87px; align-self: stretch; padding: 28px 20px 0 0; display: flex; justify-content: flex-end; }
.pinrow svg { width: 26px; height: 26px; }
.darkstrip { width: 222px; height: 36px; background: #373737; margin-bottom: 15px; }
.attr-head { display: flex; height: 157px; }
.attr-head svg { width: 32px; height: 76px; margin: 24px 21px 0 0; }
.attr-btns { display: grid; grid-template: repeat(3, 40px) / 68px 68px; gap: 4px; }
.attr-btns button:nth-child(-n+2) { grid-column: span 2; }
.attr-bar { width: 215px; height: 37px; background: #5d5d5d; margin-bottom: 5px; }
.attr-fields p { width: 91px; height: 38px; background: #2b2b2b; margin-bottom: 4px; padding-top: 6px; }
.attr-fields .alone { margin-top: 41px; }
.attr-long { width: 203px; height: 38px; background: #2b2b2b; margin: 39px 0 7px; }
.attr-rows i { display: block; width: 215px; height: 37px; background: #5d5d5d; margin-bottom: 2px; }
.notes { width: 223px; height: 178px; background: #2b2b2b; margin: auto 0 6px; }
.copytab { width: 225px; height: 52px; background: #5d5d5d; border: 1px solid #676767; color: #eee; padding: 12px 0 0 36px; margin-bottom: 6px; }
.side-tabs { padding-top: 4px; font-size: 20.7px; color: #8c8c8c; }
.side-tabs span { display: block; writing-mode: vertical-rl; width: 34px; height: 216px; padding: 28px 3px; border: 1px solid #2d2d2d; line-height: 26px; border-left: 0; }
.side-tabs .current { height: 206px; padding-top: 25px; margin-bottom: 4px; background: #444; color: #eee; border-color: #444; }

.timeline { height: 80px; border-top: 4px solid #373737; display: flex; }
.track { width: 3376px; height: 64px; margin-top: 6px; background: #2b2b2b; overflow: hidden; }
.track text { font: 21px "Open Sans", sans-serif; fill: #7c7c7c; }
.track .now { fill: #fff; }
.play { flex: 1; display: flex; justify-content: flex-end; padding: 14px 16px 0 0; }
.play svg { width: 40px; height: 40px; margin: 0 3px; }

.range { height: 70px; border-top: 4px solid #373737; display: flex; align-items: flex-start; padding-top: 7px; }
.range > .grip { margin: -4px 1px 0 0; height: 62px; }
.num { width: 178px; height: 51px; background: #2b2b2b; border-radius: 3px; margin-right: 14px; padding: 13px 9px; color: #c8c8c8; }
.slider { width: 1883px; height: 49px; background: #373737; margin: 2px 14px 0 -1px; padding: 2px 8px 0 10px; }
.slider .bar { height: 41px; background: #5d5d5d; border-radius: 4px; display: flex; align-items: center; padding: 0 10px 0 7px; gap: 11px; }
.slider b { width: 27px; height: 27px; background: #909090; border-radius: 4px; }
.slider .end { margin-left: auto; }
.slider span { padding-top: 2px; }
.range .sep { margin-top: 5px; }
.range .s1 { margin-left: -7px; margin-right: 35px; }
.bm { width: 28px; height: 36px; margin-top: 7px; margin-right: 24px; }
.range .s2 { margin-right: 32px; }
.hollow { margin: 22px 15px 0 0; width: 16px; height: 12px; background: #777; }
.range .flat { width: 202px; height: 50px; padding-top: 12px; margin-right: 24px; }
.range .s3 { margin-right: 25px; }
.range .flat + .sep { margin-left: -4px; }
.fps { width: 158px; height: 40px; margin-top: 3px; }
.fps span { padding-top: 5px; }
.range-icons { display: flex; align-items: center; margin: 2px 0 0 19px; }
.range-icons svg { width: 40px; height: 40px; margin-right: 14px; }
.range-icons svg.on { width: 46px; height: 46px; margin-right: 20px; margin-left: 1px; }
.range-icons .sep { margin: 0 26px 0 0; }

.helpline { height: 64px; border-top: 4px solid #373737; display: flex; align-items: center; }
.q { width: 32px; height: 32px; margin: 0 16px 0 2px; border-radius: 50%; background: #7fae3a; color: #333; font-weight: 800; font-size: 24px; line-height: 33px; text-align: center; }
.hint { width: 1919px; color: #eee; font-size: 19px; padding-top: 1px; }
.helpline > .bar { width: 4px; align-self: stretch; background: #373737; margin-right: 4px; }
.mel { width: 90px; color: #eee; padding-left: 21px; }
.cmd { width: 822px; height: 46px; background: #2b2b2b; border-radius: 3px; }
.dots3 { width: 4px; height: 18px; margin: 0 6px; background: radial-gradient(circle, #8a8a8a 1.3px, transparent 1.6px) 0 0 / 4px 6px; }
.out { width: 824px; height: 40px; background: #2b2b2b; margin-right: 12px; }
.helpline svg { width: 36px; height: 38px; }
.taskbar { height: 7px; background: linear-gradient(90deg, #222 0 1700px, #1e292e 2100px); padding-left: 748px; }
.taskbar i { display: block; width: 121px; height: 7px; background: #4c4c4c; }

.dialog { position: absolute; left: 1918px; top: 144px; width: 1658px; height: 1748px; background: #444; box-shadow: 0 4px 26px rgba(0, 0, 0, .5), 0 0 3px #222; color: #bdbdbd; }
.title { height: 70px; background: #fff; color: #000; display: flex; align-items: center; padding: 0 46px 0 18px; }
.title h1 { font-size: 26px; letter-spacing: 1.15px; font-weight: 400; flex: 1; padding-top: 1px; }
.tlogo { width: 37px; height: 40px; margin-right: 7px; }
.winbtns { width: 260px; height: 24px; margin-top: -2px; }
.dmenu { display: flex; height: 43px; padding: 8px 0 0 18px; gap: 31px; }
.frame { height: 1558px; margin: 0 4px; border: 3px double #2a2a2a; display: flex; border-top: 0; padding-top: 7px; padding-bottom: 2px; overflow: hidden; }
.form { width: 1619px; padding-left: 25px; height: 1549px; overflow: hidden; }
.frame .vscroll { width: 24px; padding: 8px 0; }
.frame .vscroll .thumb { margin: 22px 0 61px; }
.form h2 { display: flex; align-items: center; height: 37px; width: 1570px; background: #5d5d5d; border-radius: 2px; font-weight: 700; font-size: 20px; letter-spacing: .45px; padding: 3px 0 0 18px; }
.form h2::before { content: ""; width: 15px; height: 8px; background: #f2f2f2; clip-path: polygon(0 0, 100% 0, 50% 100%); margin: -10px 26px 0 0; }
.form h2.shut::before { width: 9px; height: 15px; clip-path: polygon(0 0, 100% 50%, 0 100%); margin: -8px 28px 0 4px; }
.form > h2:first-child { height: 36px; }
.sub h2 { margin-left: 14px; width: 1542px; }
.sub h2::before { margin-right: 21px; }
.row { display: flex; height: 35px; align-items: center; }
.row.tall { height: 38px; }
.row.cb { height: 26px; }
.row label { width: 294px; text-align: right; margin-right: 5px; padding-top: 2px; }
.row > .combo { height: 35px; }
.sub .row label { margin-right: 7px; }
.sub .row.cb label { margin-right: 5px; }
.form > .cb { padding-left: 297px; }
.form > .deep { padding-left: 369px; }
.chk { width: 26px; height: 26px; background: #2b2b2b; border-radius: 2px; }
.chk + span { margin-left: 15px; padding-top: 2px; }
.bright { color: #fff; }
.field { height: 38px; background: #2b2b2b; border-radius: 3px; padding: 6px 0 0 9px; margin-right: 6px; color: #c8c8c8; }
.ghost { color: #787878; }
.w121 { width: 121px; } .w158 { width: 158px; } .w288 { width: 288px; } .w296 { width: 296px; } .w409 { width: 409px; } .w478 { width: 478px; }
.sub .row.early label { width: 289px; margin-right: 10px; }
.sub .far label { width: 369px; margin-right: 5px; }
.sub .far2 label { width: 367px; margin-right: 5px; }
.sub .far2.cb label { margin-right: 4px; }
.sub .near label { width: 297px; margin-right: 4px; }
.use-range { width: 236px; height: 53px; margin-left: 44px; }
.g4 { margin-top: 4px; } .g5 { margin-top: 5px; } .g6 { margin-top: 6px; } .g7 { margin-top: 7px; } .g9 { margin-top: 9px; } .g10 { margin-top: 10px; } .g11 { margin-top: 11px; } .g12 { margin-top: 12px; } .g13 { margin-top: 13px; } .g14 { margin-top: 14px; } .g15 { margin-top: 15px; } .g16 { margin-top: 16px; } .g17 { margin-top: 17px; } .g18 { margin-top: 18px; } .g20 { margin-top: 20px; } .g26 { margin-top: 26px; } .g28 { margin-top: 28px; }
.actions { display: grid; grid-template-columns: 535px 547px 536px; gap: 8px; padding: 13px 12px; }
.actions button { height: 52px; }
.markup { position: absolute; left: 2000px; top: 1458px; width: 800px; height: 260px; pointer-events: none; }
.markup path { fill: none; stroke: #f00; stroke-width: 5.5; stroke-linecap: round; stroke-linejoin: round; }
```
FILE: app.js
```js
const NS = "http://www.w3.org/2000/svg";
function add(parent, name, attrs, text) {
  const n = document.createElementNS(NS, name);
  for (const k in attrs) n.setAttribute(k, attrs[k]);
  if (text !== undefined) n.textContent = text;
  parent.appendChild(n);
  return n;
}

/* The rig is stored in two local spaces, torso and legs, each with its own origin and scale. */
const torso = (x, y) => [960 + x / 2.45, 340 + y / 2.24];
const legs = (x, y) => [960 + x / 2.45, 1000 + y / 1.8667];
const rig = document.getElementById("rig");
const f = p => p[0].toFixed(1) + " " + p[1].toFixed(1);
const mix = (a, b, t) => [a[0] + (b[0] - a[0]) * t, a[1] + (b[1] - a[1]) * t];

function bone(a, b, tip) {
  const skew = mix(a, b, 0.36), skew2 = mix(a, b, 0.66);
  add(rig, "path", { class: "bone", d: `M${f(tip)}L${f(a)}L${f(b)}ZM${f(skew)}L${f(tip)}L${f(skew2)}` });
}
function joint(p, r, turn = 0) {
  const g = add(rig, "g", { transform: `translate(${f(p)}) rotate(${turn})` });
  add(g, "circle", { class: "joint", r });
  add(g, "path", { class: "joint", d: `M${-r} 0Q0 ${-r * .5} ${r} 0M0 ${-r}Q${r * .4} 0 0 ${r}` });
  add(g, "path", { stroke: "#00c800", d: `M0 0V${-r * .7}` });
  add(g, "path", { stroke: "#0000d0", d: `M0 0L${-r * .7} ${r * .3}` });
  add(g, "path", { stroke: "#e00000", d: `M0 0L${r * .6} ${r * .3}` });
}

[[289,595,346,572,75,34],[489,677,458,725,355,628],[658,1078,706,1072,510,741],[645,1080,695,1052,480,824],
 [655,1058,708,1070,615,861],[400,789,448,829,288,1183],[1079,1221,1077,1277,555,1228],[724,895,771,861,1084,1226],
 [625,868,645,822,696,853],[720,1201,762,1174,700,1112],[770,1308,812,1281,763,1237],[783,1411,832,1398,801,1342],
 [776,1430,826,1455,733,1537],[795,1460,843,1443,893,1656],[515,1197,528,1262,400,1195],[500,1225,528,1262,420,1310],
 [515,1197,490,1240,380,1260]
].forEach(b => bone(torso(b[0], b[1]), torso(b[2], b[3]), torso(b[4], b[5])));
[[690,76,728,88,380,590],[398,603,361,632,720,840],[707,856,728,874,610,943],[558,957,575,980,478,1003],
 [883,189,925,192,845,822],[876,840,844,873,1340,1218],[1322,1241,1360,1256,1240,1355],[1190,1371,1203,1397,1115,1430]
].forEach(b => bone(legs(b[0], b[1]), legs(b[2], b[3]), legs(b[4], b[5])));
[[62,8,13],[328,611,13],[497,717,12],[437,774,13],[461,800,12],[609,841,12],[726,858,13],[1109,1250,12.5],[685,1091,10.5],
 [752,1207,10.5],[799,1316,10.5],[809,1427,10.5],[527,1225,12],[280,1207,13]
].forEach((j, i) => joint(torso(j[0], j[1]), j[2], i * 17));
[[720,62,10],[907,168,11],[369,610,10.5],[734,851,9.5],[589,958,9.5],[457,1013,9.5],[841,843,11],[1357,1232,10.5],[1224,1371,10.5],[1095,1442,11]
].forEach(j => joint(legs(j[0], j[1]), j[2]));

/* Fingers: outer joints are fixed, inner ones are scattered with a repeatable generator. */
let seed = 7;
const rnd = () => (seed = (seed * 16807) % 2147483647) / 2147483647;
const hand = [[326,1185],[405,1187],[240,1255],[192,1278],[195,1323],[225,1370],[280,1350],[350,1380],[400,1405],[445,1385],[455,1332],[370,1215],[310,1220],[440,1235]];
for (let i = 0; i < 36; i++) {
  const x = 235 + rnd() * 200;
  hand.push([x, 1310 - (x - 235) * 0.15 + (rnd() - 0.5) * 130]);
}
hand.forEach((h, i) => {
  joint(torso(h[0], h[1]), 12, rnd() * 180);
  const o = hand[(i * 7 + 3) % hand.length];
  if (i > 11 && Math.hypot(h[0] - o[0], h[1] - o[1]) < 140) bone(torso(h[0] - 12, h[1] - 12), torso(h[0] + 12, h[1] + 12), torso(o[0], o[1]));
});

/* Floor grid */
const floor = document.getElementById("floor");
const L = legs(707, 1043), T = legs(1022, 910), R = legs(1252, 1043), B = legs(932, 1187);
for (let i = 0; i <= 24; i++) {
  const t = i / 24, k = i === 12 ? "floor-axis" : "floor-line";
  add(floor, "path", { class: k, d: `M${f(mix(L, T, t))}L${f(mix(B, R, t))}M${f(mix(L, B, t))}L${f(mix(T, R, t))}` });
}

/* Time slider */
const track = document.getElementById("track");
add(track, "rect", { x: 41, y: 1803, width: 29, height: 64, fill: "#555" });
for (let n = 0; n <= 100; n += 2) {
  const x = 40 + n * 31.63;
  add(track, "rect", { x: x - 2, y: 1833, width: 4, height: 26, fill: "#8a8a8a" });
  add(track, "text", { x: x + 6, y: 1825 }, n);
}
add(track, "rect", { x: 40, y: 1861, width: 3400, height: 6, fill: "#4e88ae" });
add(track, "text", { x: 46, y: 1850, class: "now" }, "0");
```
